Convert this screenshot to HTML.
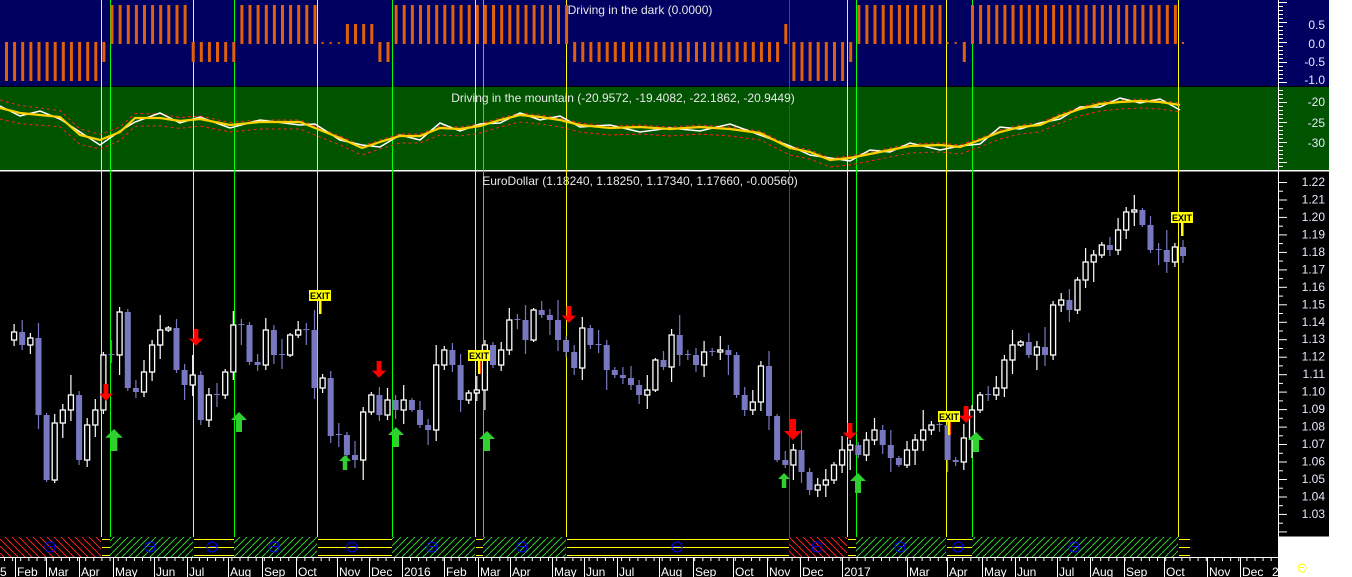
<!DOCTYPE html>
<html><head><meta charset="utf-8"><style>
html,body{margin:0;padding:0;background:#fff;width:1352px;height:577px;overflow:hidden}
svg{display:block}
text{font-family:"Liberation Sans",Arial,sans-serif}
</style></head><body>
<svg id="s" width="1352" height="577" xmlns="http://www.w3.org/2000/svg">
<rect x="0" y="0" width="1352" height="577" fill="#fff"/>
<rect x="0" y="0" width="1329" height="86" fill="#000060"/>
<rect x="0" y="86" width="1329" height="1" fill="#000"/>
<rect x="0" y="87" width="1329" height="83" fill="#005400"/>
<rect x="0" y="170" width="1329" height="1.5" fill="#fff"/>
<rect x="0" y="171.5" width="1329" height="365" fill="#000"/>
<rect x="0" y="536" width="1278" height="41" fill="#000"/>
<g id="g"></g>
</svg>
<script>
(function(){
var NS="http://www.w3.org/2000/svg",g=document.getElementById('g');
function el(t,a,txt){var e=document.createElementNS(NS,t);for(var k in a)e.setAttribute(k,a[k]);if(txt!=null)e.textContent=txt;g.appendChild(e);return e;}
[[101,'#ffff00'],[193,'#ffff00'],[317,'#ffff00'],[475,'#ffff00'],[566,'#ffff00'],[847,'#ffff00'],[946,'#ffff00'],[1178,'#ffff00'],
 [110,'#00ff00'],[234,'#00ff00'],[392,'#00ff00'],[483,'#00ff00'],[856,'#00ff00'],[972,'#00ff00'],[789,'#ff0000']].forEach(function(v){
 el('rect',{x:v[0],y:0,width:1,height:537,fill:v[1]});});
var N=146,x0=6,st=1177/(N-1);
function typ(x){
 var R=[[0,102,'D'],[102,110,'d'],[110,192,'U'],[192,234,'d'],[234,317,'U'],[317,342,'z'],[342,375,'u'],[375,392,'d'],[392,478,'U'],[478,482,'z'],[482,567,'U'],[567,781,'d'],[781,788,'u'],[788,848,'D'],[848,854,'d'],[854,946,'U'],[946,962,'z'],[962,970,'d'],[970,1180,'U'],[1180,1200,'z']];
 for(var i=0;i<R.length;i++)if(x>=R[i][0]&&x<R[i][1])return R[i][2];return 'U';}
for(var i=0;i<N;i++){var x=x0+i*st,t=typ(x),y1,y2;
 if(t=='U'){y1=5;y2=44}else if(t=='u'){y1=24;y2=44}else if(t=='D'){y1=42;y2=81}else if(t=='d'){y1=42;y2=62}else{y1=42;y2=44}
 el('rect',{x:(x-1).toFixed(1),y:y1,width:t=='z'?2:3,height:y2-y1,fill:'#e0600c'});}
var Y=[[0,108],[20,113],[40,115],[60,117],[80,135],[100,140],[120,132],[135,118],[160,118],[180,121],[200,119],[230,125],[260,122],[300,122],[315,128],[340,138],[362,148],[380,142],[400,136],[420,136],[440,128],[460,129],[480,126],[500,120],[520,115],[540,117],[560,120],[580,125],[610,128],[640,127],[670,129],[700,127],[730,129],[760,133],[790,148],[810,152],[830,160],[850,158],[870,154],[890,150],[910,146],[940,145],[960,147],[980,140],[1000,132],[1020,127],[1040,125],[1060,116],[1080,109],[1100,104],[1120,102],[1140,101],[1160,102],[1180,105]];
function pts(f){return Y.map(function(p,i){return p[0]+','+f(p,i).toFixed(1)}).join(' ')}
var wig=[-2,3,-4,2,-3,5,-1,4,-5,2,-2,3];
el('polyline',{points:pts(function(p,i){return p[1]-8+Math.min(i,12)*0.5}),fill:'none',stroke:'#ff2020','stroke-width':1,'stroke-dasharray':'3,3'});
el('polyline',{points:pts(function(p,i){return p[1]+7+Math.max(0,4-i*0.4)}),fill:'none',stroke:'#ff2020','stroke-width':1,'stroke-dasharray':'3,3'});
el('polyline',{points:pts(function(p,i){return p[1]+wig[i%12]}),fill:'none',stroke:'#fff','stroke-width':1.5});
el('polyline',{points:pts(function(p){return p[1]}),fill:'none',stroke:'#ffd000','stroke-width':2.2});
var C=[340,332,345,338,415,480,423,410,395,460,425,410,355,355,312,388,392,372,345,330,328,370,385,375,420,395,395,372,325,325,362,365,330,355,355,335,330,330,388,378,436,435,455,460,412,395,415,400,410,400,410,425,430,365,350,365,400,393,390,345,365,350,320,320,340,310,315,320,340,352,368,328,345,345,370,375,378,385,395,390,360,367,335,355,355,365,352,352,350,355,395,410,402,366,416,460,465,450,472,490,485,480,465,450,445,455,440,430,445,458,465,450,440,430,425,425,460,462,438,410,395,395,388,360,345,342,355,347,355,305,300,310,280,262,255,245,250,230,212,210,225,250,250,262,247,256];
var n=C.length,cs=1177/(n-1),W=[3,8,12,5,15,2,9,6,20,4,7,11,3,14,5];
for(var i=1;i<n;i++){var x=x0+i*cs,o=C[i-1],c=C[i];if(Math.abs(o-c)<2){o=c-1}
 var tp=Math.min(o,c),bt=Math.max(o,c),up=c<o,col=up?'#fff':'#7878c0';
 el('line',{x1:x.toFixed(1),x2:x.toFixed(1),y1:tp-W[i%15],y2:bt+W[(i*7)%15],stroke:col,'stroke-width':1.2});
 if(up)el('rect',{x:(x-2.5).toFixed(1),y:tp,width:5,height:Math.max(1,bt-tp),fill:'#000',stroke:'#fff','stroke-width':1.3});
 else el('rect',{x:(x-3).toFixed(1),y:tp,width:6,height:Math.max(1,bt-tp),fill:'#7878c0'});}
function dn(x,y,s){el('polygon',{points:[x-2*s,y,x+2*s,y,x+2*s,y+8*s,x+6*s,y+8*s,x,y+14*s,x-6*s,y+8*s,x-2*s,y+8*s].join(' '),fill:'#ff0000'});}
function upA(x,y,s){el('polygon',{points:[x-3*s,y,x+3*s,y,x+3*s,y-12*s,x+8*s,y-12*s,x,y-20*s,x-8*s,y-12*s,x-3*s,y-12*s].join(' '),fill:'#30d030'});}
dn(106,384,1.2);dn(196,329,1.2);dn(379,361,1.2);dn(569,306,1.2);dn(793,419,1.5);dn(850,423,1.2);dn(966,406,1.2);
upA(114,451,1.1);upA(239,432,1);upA(345,470,0.75);upA(396,447,1);upA(487,451,1);upA(784,488,0.75);upA(858,493,1);upA(976,452,1);
[[320,294],[479,354],[949,415],[1182,216]].forEach(function(p){
 el('rect',{x:p[0]-1,y:p[1]+7,width:3,height:13,fill:'#ffff00'});el('rect',{x:p[0]+1,y:p[1]+7,width:1,height:13,fill:'#ff4000'});
 el('rect',{x:p[0]-11,y:p[1]-4,width:22,height:11,fill:'#ffff00'});
 el('text',{x:p[0],y:p[1]+5,'font-size':9,'font-weight':'bold','text-anchor':'middle',fill:'#000'},'EXIT');});
el('text',{x:640,y:14,'font-size':12,'text-anchor':'middle',fill:'#e8e8e8'},'Driving in the dark (0.0000)');
el('text',{x:623,y:102,'font-size':12,'text-anchor':'middle',fill:'#e8e8e8'},'Driving in the mountain (-20.9572, -19.4082, -22.1862, -20.9449)');
el('text',{x:640,y:185,'font-size':12,'text-anchor':'middle',fill:'#e8e8e8'},'EuroDollar (1.18240, 1.18250, 1.17340, 1.17660, -0.00560)');
el('rect',{x:1278,y:0,width:1,height:537,fill:'#fff'});
for(var y=2;y<86;y+=4)el('rect',{x:1279,y:y,width:(y%20<4)?8:4,height:1,fill:'#fff'});
for(var y=90;y<170;y+=4)el('rect',{x:1279,y:y,width:(y%20<4)?8:4,height:1,fill:'#fff'});
for(var k=0;k<=40;k++){var y=182+k*8.735;if(y>535)break;el('rect',{x:1279,y:y.toFixed(1),width:k%2?4:8,height:1,fill:'#fff'});}
[['0.5',25],['0.0',44],['-0.5',62],['-1.0',80],['-20',102],['-25',123],['-30',143]].forEach(function(l){el('text',{x:1325,y:l[1]+4,'font-size':12,'text-anchor':'end',fill:'#e8e8ff'},l[0]);});
for(var k=0;k<20;k++){el('text',{x:1325,y:(182+k*17.47+4).toFixed(1),'font-size':12,'text-anchor':'end',fill:'#e8e8ff'},(1.22-k*0.01).toFixed(2));}
var defs=document.createElementNS(NS,'defs');g.appendChild(defs);
defs.innerHTML='<pattern id="hg" width="7" height="7" patternUnits="userSpaceOnUse"><path d="M0,7 L7,0" stroke="#30d030" stroke-width="1"/></pattern><pattern id="hr" width="7" height="7" patternUnits="userSpaceOnUse"><path d="M0,0 L7,7" stroke="#ff2020" stroke-width="1"/></pattern>';
[[0,101,'r'],[101,110,'y'],[110,193,'g'],[193,234,'y'],[234,317,'g'],[317,392,'y'],[392,475,'g'],[475,483,'y'],[483,566,'g'],[566,789,'y'],[789,847,'r'],[847,856,'y'],[856,946,'g'],[946,972,'y'],[972,1178,'g'],[1178,1190,'y']].forEach(function(s){
 if(s[2]=='y'){[539,547,555].forEach(function(y){el('rect',{x:s[0]+1,y:y,width:s[1]-s[0]-1,height:1,fill:'#ffff00'});});}
 else el('rect',{x:s[0],y:537,width:s[1]-s[0],height:20,fill:'url(#h'+s[2]+')'});});
[50,150,212,274,352,432,522,677,817,900,958,1074].forEach(function(x){el('circle',{cx:x,cy:547,r:5,fill:'none',stroke:'#0000ff','stroke-width':1});el('rect',{x:x-3,y:546,width:6,height:1,fill:'#0000ff'});});
el('rect',{x:0,y:557,width:1278,height:1,fill:'#fff'});
for(var x=4;x<1278;x+=8.12)el('rect',{x:x.toFixed(1),y:558,width:1,height:3,fill:'#fff'});
[['Feb',17],['Mar',48],['Apr',81],['May',115],['Jun',156],['Jul',189],['Aug',230],['Sep',264],['Oct',298],['Nov',339],['Dec',371],['2016',404],['Feb',446],['Mar',480],['Apr',512],['May',554],['Jun',586],['Jul',619],['Aug',661],['Sep',695],['Oct',735],['Nov',769],['Dec',802],['2017',844],['Mar',909],['Apr',949],['May',984],['Jun',1017],['Jul',1059],['Aug',1092],['Sep',1126],['Oct',1166],['Nov',1209],['Dec',1242]].forEach(function(l){
 el('rect',{x:l[1]-2,y:558,width:1,height:19,fill:'#fff'});
 el('text',{x:l[1],y:576,'font-size':12,fill:'#fff'},l[0]);});
el('text',{x:0,y:576,'font-size':12,fill:'#fff'},'5');
el('text',{x:1272,y:576,'font-size':12,fill:'#fff'},'2');
el('circle',{cx:1302,cy:568,r:4,fill:'none',stroke:'#ffff00','stroke-width':1});
el('rect',{x:1300,y:567,width:4,height:1,fill:'#ffff00'});
})();
</script>
</body></html>
